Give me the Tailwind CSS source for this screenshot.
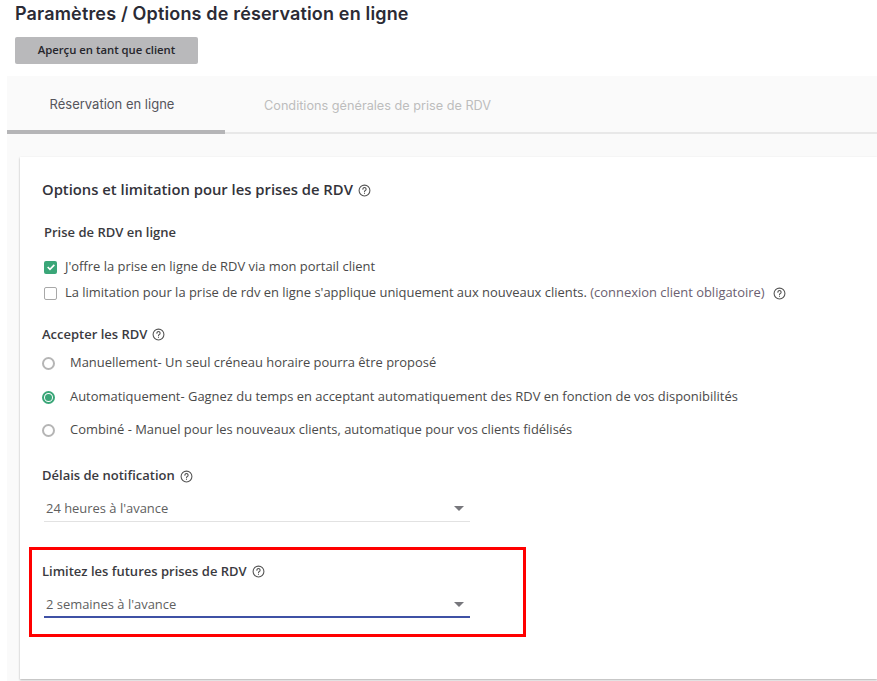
<!DOCTYPE html>
<html lang="fr">
<head>
<meta charset="utf-8">
<script src="https://cdn.jsdelivr.net/npm/@tailwindcss/browser@4"></script>
<title>Paramètres</title>
</head>
<body class="bg-white">
<div class="w-[877px] h-[681px] overflow-hidden flex flex-col font-['Open_Sans',sans-serif] text-[#4a4a4a]">
  <header class="pl-[15px] h-[76px] shrink-0">
    <h1 class="font-['Inter',sans-serif] font-semibold text-[18px] tracking-[0.16px] leading-[20px] pt-[4px] text-[#2b2b35]">Paramètres / Options de réservation en ligne</h1>
    <button class="mt-[13px] w-[183px] h-[27px] rounded-[2px] bg-[#b9b9bb] text-[11.3px] font-semibold text-[#26262c] flex items-center justify-center">Aperçu en tant que client</button>
  </header>
  <main class="ml-[7px] flex-1 bg-[#fafafa] flex flex-col min-h-0">
    <nav class="h-[58px] shrink-0 flex border-b-2 border-[#e8e8e8] font-['Inter',sans-serif]">
      <div class="w-[218px] h-[58px] border-b-4 border-[#b5b5b7] flex items-center justify-center text-[13px] text-[#55555c] pt-[4px] pr-[8px]">Réservation en ligne</div>
      <div class="pl-[39px] h-[56px] flex items-center text-[12.7px] text-[#bdbdbd] pt-[3px]">Conditions générales de prise de RDV</div>
    </nav>
    <section class="relative mt-[23px] ml-[13px] h-[522px] bg-white shadow-[0_1px_2px_rgba(0,0,0,0.3)] pl-[22px] pt-[22px]">
      <h2 class="flex items-center gap-[5px] text-[14.8px] leading-[20px] font-semibold text-[#33333a]">Options et limitation pour les prises de RDV
        <svg class="w-[13px] h-[13px] mt-[2px]" viewBox="0 0 24 24" fill="none" stroke="#555" stroke-width="2"><circle cx="12" cy="12" r="10"/><path d="M9 9.500a3 3 0 1 1 4.500 2.600c-1 .6-1.500 1.200-1.500 2.400" stroke-linecap="round"/><circle cx="12" cy="17.500" r="1" fill="#555" stroke="none"/></svg>
      </h2>
      <h3 class="mt-[24px] ml-[2px] text-[13px] leading-[18px] font-semibold text-[#3a3a40]">Prise de RDV en ligne</h3>
      <div class="mt-[17px] ml-[2px] flex items-center gap-[8px] h-[18px] text-[12.95px]">
        <span class="w-[13px] h-[13px] rounded-[2px] bg-[#3aa678] flex items-center justify-center">
          <svg class="w-[10px] h-[10px]" viewBox="0 0 24 24" fill="none" stroke="#fff" stroke-width="4"><path d="M4 12l5.500 5.500L20 7"/></svg>
        </span>
        <span>J'offre la prise en ligne de RDV via mon portail client</span>
      </div>
      <div class="mt-[8px] ml-[2px] flex items-center gap-[8px] h-[18px] text-[12.95px]">
        <span class="w-[13px] h-[13px] rounded-[2px] border border-[#a8a8a8] bg-white"></span>
        <span>La limitation pour la prise de rdv en ligne s'applique uniquement aux nouveaux clients. <span class="text-[#6b6070]">(connexion client obligatoire)</span></span>
        <svg class="w-[13px] h-[13px] ml-[0px]" viewBox="0 0 24 24" fill="none" stroke="#555" stroke-width="2"><circle cx="12" cy="12" r="10"/><path d="M9 9.500a3 3 0 1 1 4.500 2.600c-1 .6-1.500 1.200-1.500 2.400" stroke-linecap="round"/><circle cx="12" cy="17.500" r="1" fill="#555" stroke="none"/></svg>
      </div>
      <h3 class="mt-[23px] flex items-center gap-[5px] text-[13px] leading-[18px] font-semibold text-[#3a3a40]">Accepter les RDV
        <svg class="w-[13px] h-[13px]" viewBox="0 0 24 24" fill="none" stroke="#555" stroke-width="2"><circle cx="12" cy="12" r="10"/><path d="M9 9.500a3 3 0 1 1 4.500 2.600c-1 .6-1.500 1.200-1.500 2.400" stroke-linecap="round"/><circle cx="12" cy="17.500" r="1" fill="#555" stroke="none"/></svg>
      </h3>
      <div class="mt-[11px] flex items-center gap-[15px] h-[18px] text-[12.95px]">
        <span class="w-[13px] h-[13px] rounded-full border-2 border-[#b5b5b5] bg-white"></span>
        <span>Manuellement- Un seul créneau horaire pourra être proposé</span>
      </div>
      <div class="mt-[16px] flex items-center gap-[15px] h-[18px] text-[12.95px]">
        <span class="w-[13px] h-[13px] rounded-full border-2 border-[#3aa678] bg-white flex items-center justify-center"><span class="w-[7px] h-[7px] rounded-full bg-[#3aa678]"></span></span>
        <span>Automatiquement- Gagnez du temps en acceptant automatiquement des RDV en fonction de vos disponibilités</span>
      </div>
      <div class="mt-[15px] flex items-center gap-[15px] h-[18px] text-[12.95px]">
        <span class="w-[13px] h-[13px] rounded-full border-2 border-[#b5b5b5] bg-white"></span>
        <span>Combiné - Manuel pour les nouveaux clients, automatique pour vos clients fidélisés</span>
      </div>
      <h3 class="mt-[27px] flex items-center gap-[5px] text-[13px] leading-[18px] font-semibold text-[#3a3a40]">Délais de notification
        <svg class="w-[13px] h-[13px] mt-[2px]" viewBox="0 0 24 24" fill="none" stroke="#555" stroke-width="2"><circle cx="12" cy="12" r="10"/><path d="M9 9.500a3 3 0 1 1 4.500 2.600c-1 .6-1.500 1.200-1.500 2.400" stroke-linecap="round"/><circle cx="12" cy="17.500" r="1" fill="#555" stroke="none"/></svg>
      </h3>
      <div class="mt-[14px] ml-[2px] w-[426px] h-[24px] border-b border-[#e2e2e2] flex items-center justify-between pl-[2px] pr-[6px] text-[12.95px] text-[#5f5f5f] pb-[2px]">
        <span>24 heures à l'avance</span>
        <span class="w-0 h-0 border-x-[5px] border-x-transparent border-t-[5px] border-t-[#77777c]"></span>
      </div>
      <h3 class="mt-[40px] flex items-center gap-[5px] text-[13px] leading-[18px] font-semibold text-[#3a3a40]">Limitez les futures prises de RDV
        <svg class="w-[13px] h-[13px]" viewBox="0 0 24 24" fill="none" stroke="#555" stroke-width="2"><circle cx="12" cy="12" r="10"/><path d="M9 9.500a3 3 0 1 1 4.500 2.600c-1 .6-1.500 1.200-1.500 2.400" stroke-linecap="round"/><circle cx="12" cy="17.500" r="1" fill="#555" stroke="none"/></svg>
      </h3>
      <div class="mt-[15px] ml-[2px] w-[426px] h-[23px] border-b-2 border-[#3f51a5] flex items-center justify-between pl-[2px] pr-[6px] text-[12.95px] text-[#5f5f5f] pb-[2px]">
        <span>2 semaines à l'avance</span>
        <span class="w-0 h-0 border-x-[5px] border-x-transparent border-t-[5px] border-t-[#77777c]"></span>
      </div>
      <div class="absolute left-[9px] top-[390px] w-[497px] h-[90px] border-[3px] border-[#ff0000] pointer-events-none"></div>
    </section>
  </main>
</div>
</body>
</html>
